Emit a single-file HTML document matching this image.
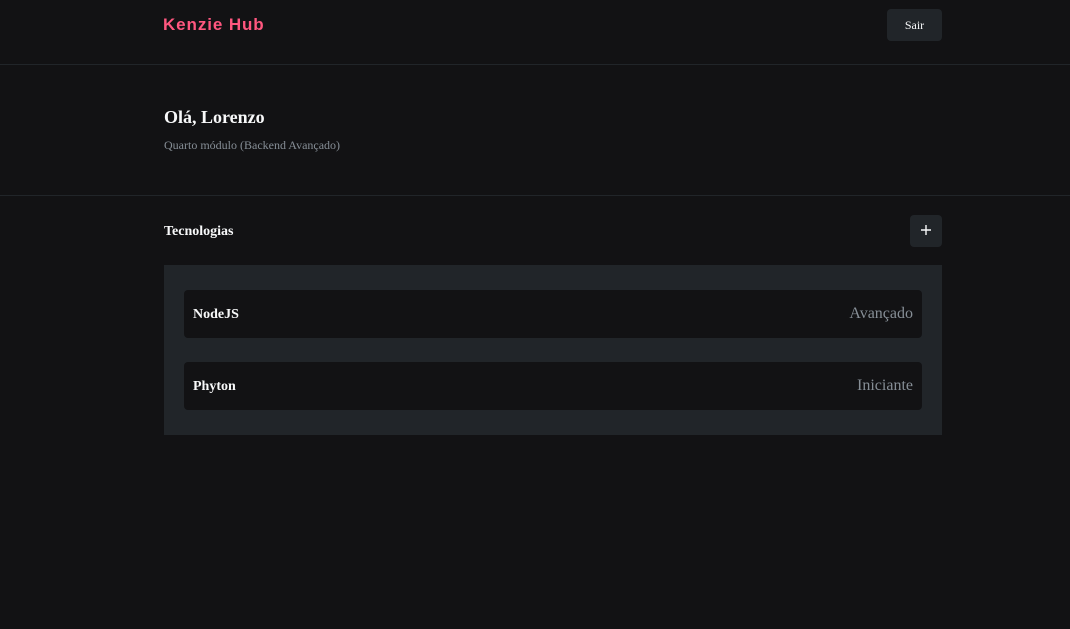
<!DOCTYPE html>
<html><head><meta charset="utf-8"><style>
*{margin:0;padding:0;box-sizing:border-box}
body{width:1070px;height:629px;background:#121214;font-family:"Liberation Serif",serif;position:relative;overflow:hidden;color:#f8f9fa}
.logo{position:absolute;left:163px;top:16px;line-height:17px;font-family:"Liberation Sans",sans-serif;font-weight:bold;font-size:17px;color:#ff577f;letter-spacing:0.9px}
.sair{position:absolute;left:887px;top:9px;width:55px;height:32px;background:#212529;border-radius:4px;color:#f8f9fa;font-size:12px;display:flex;align-items:center;justify-content:center}
.line{position:absolute;left:0;width:1070px;height:1px;background:#212529}
h1{position:absolute;left:164px;top:107px;font-size:18px;font-weight:bold}
.sub{position:absolute;left:164px;top:138px;font-size:12px;color:#868e96}
.tec{position:absolute;left:164px;top:224px;font-size:14px;font-weight:bold;line-height:16px}
.plus{position:absolute;left:910px;top:215px;width:32px;height:32px;background:#212529;border-radius:4px}
.plus svg{position:absolute;left:10px;top:9px}
.box{position:absolute;left:164px;top:265px;width:778px;height:170px;background:#212529}
.item{position:absolute;left:20px;width:738px;height:48px;background:#121214;border-radius:4px;display:flex;align-items:center;justify-content:space-between;padding:0 9px}
.item b{font-size:14px;position:relative;top:1px}
.item span{font-size:16px;color:#868e96}
</style></head><body>
<div class="logo">Kenzie Hub</div>
<div class="sair">Sair</div>
<div class="line" style="top:64px"></div>
<h1>Olá, Lorenzo</h1>
<div class="sub">Quarto módulo (Backend Avançado)</div>
<div class="line" style="top:195px"></div>
<div class="tec">Tecnologias</div>
<div class="plus"><svg width="12" height="12" viewBox="0 0 12 12"><path d="M6 1V11M1 6H11" stroke="#f8f9fa" stroke-width="1.4"/></svg></div>
<div class="box">
<div class="item" style="top:25px"><b>NodeJS</b><span>Avançado</span></div>
<div class="item" style="top:97px"><b>Phyton</b><span>Iniciante</span></div>
</div>
</body></html>
